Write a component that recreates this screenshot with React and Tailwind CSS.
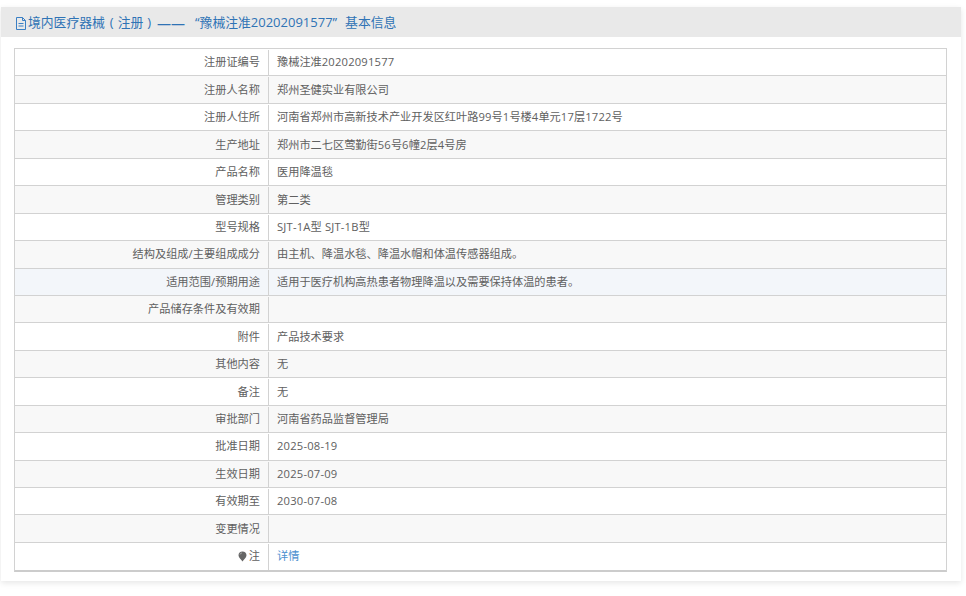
import React from 'react';

const rows = [
    ['注册证编号', '豫械注准20202091577'],
    ['注册人名称', '郑州圣健实业有限公司'],
    ['注册人住所', '河南省郑州市高新技术产业开发区红叶路99号1号楼4单元17层1722号'],
    ['生产地址', '郑州市二七区莺勤街56号6幢2层4号房'],
    ['产品名称', '医用降温毯'],
    ['管理类别', '第二类'],
    ['型号规格', 'SJT-1A型 SJT-1B型'],
    ['结构及组成/主要组成成分', '由主机、降温水毯、降温水帽和体温传感器组成。'],
    ['适用范围/预期用途', '适用于医疗机构高热患者物理降温以及需要保持体温的患者。'],
    ['产品储存条件及有效期', ''],
    ['附件', '产品技术要求'],
    ['其他内容', '无'],
    ['备注', '无'],
    ['审批部门', '河南省药品监督管理局'],
    ['批准日期', '2025-08-19'],
    ['生效日期', '2025-07-09'],
    ['有效期至', '2030-07-08'],
    ['变更情况', ''],
];

const font = { fontFamily: '"Open Sans", "Noto Sans CJK SC", sans-serif' };

// latin runs are a touch wider than the font gives on its own
const Mixed = ({ text }) =>
    text.split(/([\x20-\x7e]+)/).map((part, i) =>
        i % 2 === 1 ? <span key={i} className="tracking-[0.2px]">{part}</span> : part
    );

const FileIcon = () => (
    <svg width="12" height="13" viewBox="0 0 12 13" fill="none" stroke="#3a7fc4" strokeWidth="1" className="shrink-0">
        <path d="M1.5 0.5H7.5L10.5 3.5V12.5H1.5Z" />
        <path d="M7.5 0.5V3.5H10.5M3.5 6.5H8.5M3.5 9H8.5" />
    </svg>
);

const PinIcon = () => (
    <svg width="9" height="11" viewBox="0 0 9 11" className="shrink-0">
        <path d="M4.5 0.5C2.2 0.5 0.5 2.1 0.5 4.2C0.5 6.5 3.2 8.4 4.5 10.5C5.8 8.4 8.5 6.5 8.5 4.2C8.5 2.1 6.8 0.5 4.5 0.5Z" fill="#666" />
        <path d="M2 3.5C2.3 2.6 3 2 3.9 1.9" fill="none" stroke="#bbb" strokeWidth="0.8" />
    </svg>
);

const Row = ({ label, children, className }) => (
    <div className={`flex h-[27.45px] border-b border-[#d2d2d2] pt-px text-[11.2px] text-[#606060] ${className}`}>
        <div className="flex w-[253px] shrink-0 items-center justify-end pr-2 whitespace-pre"><span><Mixed text={label} /></span></div>
        <div className="flex flex-1 items-center border-l border-[#d2d2d2] pl-2 whitespace-pre"><span>{children}</span></div>
    </div>
);

const App = () => {
    return (
        <div className="h-[596px] w-[966px] overflow-hidden bg-white pl-px pt-[7px]" style={font}>
            <div className="h-[574px] w-[960px] bg-white shadow-[0_2px_6px_rgba(0,0,0,0.1)]">
                <div className="flex h-[30px] items-center bg-[#e9e9e9] pl-[14px] pt-[2px] text-[12.8px] text-[#2f73b5] whitespace-pre">
                    <FileIcon />
                    <span className="ml-px">境内医疗器械</span>
                    <span className="ml-[5px] mr-[4px] text-[13px]">(</span>
                    <span>注册</span>
                    <span className="ml-[4px] mr-[6px] text-[13px]">)</span>
                    <span className="w-[28px] text-[14px]">——</span>
                    <span className="ml-[10px] text-[13px]">“</span>
                    <span>豫械注准</span>
                    <span className="text-[13px]">20202091577”</span>
                    <span className="ml-[8px]">基本信息</span>
                </div>
                <div className="ml-[13px] mt-[11px] w-[933px] border-x border-t border-[#d2d2d2] border-b-2 border-b-[#cccccc]">
                    {rows.map(([label, value], i) => (
                        <Row
                            key={label}
                            label={label}
                            className={i === 8 ? 'bg-[#f3f6fa]' : i % 2 === 1 ? 'bg-[#f8f8f8]' : 'bg-white'}
                        >
                            <Mixed text={value} />
                        </Row>
                    ))}
                    <div className="flex h-[27px] pt-px text-[11.2px] text-[#606060]">
                        <div className="flex w-[253px] shrink-0 items-center justify-end gap-[2px] pr-2">
                            <PinIcon />
                            <span>注</span>
                        </div>
                        <div className="flex flex-1 items-center border-l border-[#d2d2d2] pl-2 text-[#4a90cf]">详情</div>
                    </div>
                </div>
            </div>
        </div>
    );
};

export default App;
